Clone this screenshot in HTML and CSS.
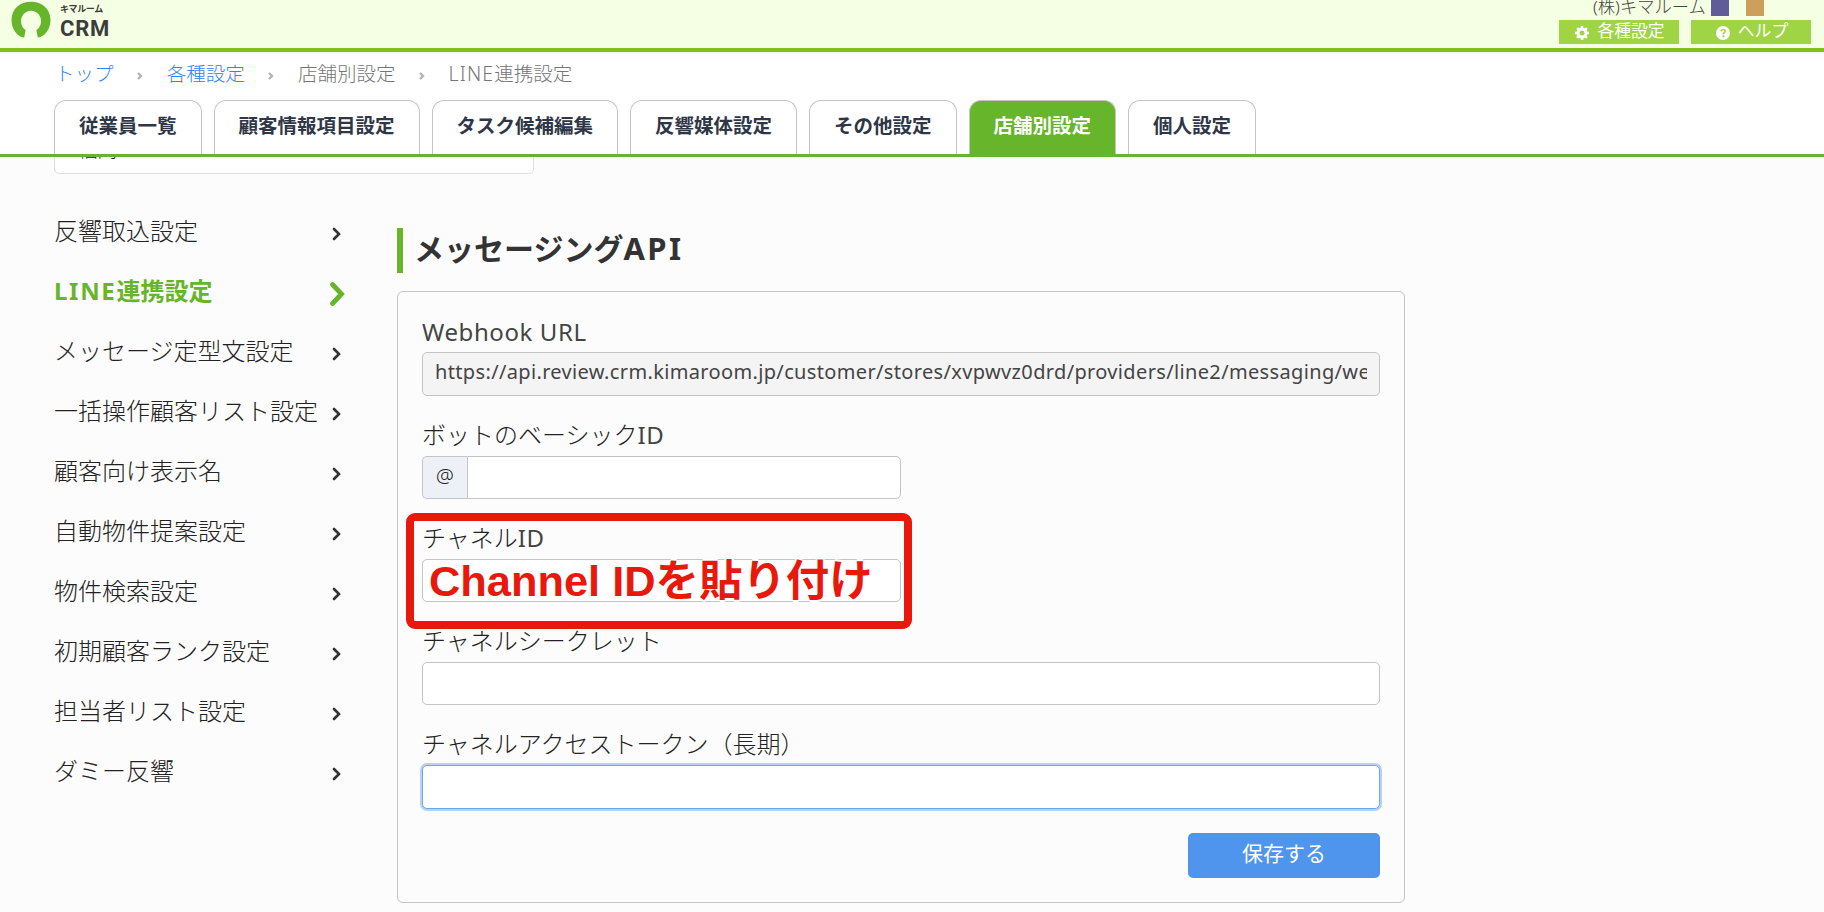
FILE: index.html
```
<!DOCTYPE html>
<html lang="ja">
<head>
<meta charset="UTF-8">
<meta name="viewport" content="width=device-width, initial-scale=1.0">
<title>LINE連携設定 | キマルームCRM</title>
<link rel="stylesheet" href="styles.css">
</head>
<body>
<header class="header">
    <a class="logo" href="#">
        <svg class="logo-mark" width="40" height="38" viewBox="0 0 40 38">
            <path d="M13.2 37.6 L14.6 30 A10 10.5 0 1 1 25.4 30 L26.8 37.6 C34 36.5 39.5 29 39.5 20 C39.5 9 31 1.8 20 1.8 C9 1.8 0.5 9 0.5 20 C0.5 29 6 36.5 13.2 37.6 Z" fill="#67b52a"/>
        </svg>
        <span class="logo-text">
            <span class="logo-kana">キマルーム</span>
            <span class="logo-crm">CRM</span>
        </span>
    </a>
    <div class="header-right">
        <div class="account">
            <span class="company">(株)キマルーム</span>
            <span class="mask mask-purple"></span>
            <span class="mask mask-brown"></span>
        </div>
        <div class="header-buttons">
            <a class="header-btn" href="#">
                <svg width="14" height="14" viewBox="0 0 14 14">
                    <circle cx="7" cy="7" r="4" fill="none" stroke="#fff" stroke-width="3"/>
                    <path d="M7 0v2.5M7 11.5V14M0 7h2.5M11.5 7H14M2.1 2.1l1.7 1.7M10.2 10.2l1.7 1.7M2.1 11.9l1.7-1.7M10.2 3.8l1.7-1.7" stroke="#fff" stroke-width="2.6"/>
                </svg>
                各種設定
            </a>
            <a class="header-btn" href="#">
                <svg width="14" height="14" viewBox="0 0 14 14">
                    <circle cx="7" cy="7" r="7" fill="#fff"/>
                    <path d="M4.9 5.4c.2-1.3 1-1.9 2.2-1.9 1.2 0 2.1.7 2.1 1.7 0 1.5-1.9 1.4-1.9 3" fill="none" stroke="#9fd544" stroke-width="1.6"/>
                    <rect x="6.4" y="9.3" width="1.9" height="1.9" fill="#9fd544"/>
                </svg>
                ヘルプ
            </a>
        </div>
    </div>
</header>

<nav class="breadcrumb">
    <a href="#">トップ</a>
    <svg class="sep" width="6" height="8" viewBox="0 0 6 8"><path d="M1 1l3 3-3 3"/></svg>
    <a href="#">各種設定</a>
    <svg class="sep" width="6" height="8" viewBox="0 0 6 8"><path d="M1 1l3 3-3 3"/></svg>
    <span>店舗別設定</span>
    <svg class="sep" width="6" height="8" viewBox="0 0 6 8"><path d="M1 1l3 3-3 3"/></svg>
    <span><span class="latin">LINE</span>連携設定</span>
</nav>

<ul class="tabs">
    <li class="tab">従業員一覧</li>
    <li class="tab">顧客情報項目設定</li>
    <li class="tab">タスク候補編集</li>
    <li class="tab">反響媒体設定</li>
    <li class="tab">その他設定</li>
    <li class="tab active">店舗別設定</li>
    <li class="tab">個人設定</li>
</ul>

<div class="store-clip">
    <div class="store-select">福岡</div>
</div>

<main class="content">
    <ul class="side-menu">
        <li><span>反響取込設定</span><svg class="chevron" width="10" height="14" viewBox="0 0 10 14"><path d="M2 2l5 5-5 5"/></svg></li>
        <li class="active"><span><span class="latin">LINE</span>連携設定</span><svg class="chevron" width="16" height="26" viewBox="0 0 16 26"><path d="M3.5 3.5l9 9.5-9 9.5"/></svg></li>
        <li><span>メッセージ定型文設定</span><svg class="chevron" width="10" height="14" viewBox="0 0 10 14"><path d="M2 2l5 5-5 5"/></svg></li>
        <li><span>一括操作顧客リスト設定</span><svg class="chevron" width="10" height="14" viewBox="0 0 10 14"><path d="M2 2l5 5-5 5"/></svg></li>
        <li><span>顧客向け表示名</span><svg class="chevron" width="10" height="14" viewBox="0 0 10 14"><path d="M2 2l5 5-5 5"/></svg></li>
        <li><span>自動物件提案設定</span><svg class="chevron" width="10" height="14" viewBox="0 0 10 14"><path d="M2 2l5 5-5 5"/></svg></li>
        <li><span>物件検索設定</span><svg class="chevron" width="10" height="14" viewBox="0 0 10 14"><path d="M2 2l5 5-5 5"/></svg></li>
        <li><span>初期顧客ランク設定</span><svg class="chevron" width="10" height="14" viewBox="0 0 10 14"><path d="M2 2l5 5-5 5"/></svg></li>
        <li><span>担当者リスト設定</span><svg class="chevron" width="10" height="14" viewBox="0 0 10 14"><path d="M2 2l5 5-5 5"/></svg></li>
        <li><span>ダミー反響</span><svg class="chevron" width="10" height="14" viewBox="0 0 10 14"><path d="M2 2l5 5-5 5"/></svg></li>
    </ul>

    <section class="panel">
        <h2 class="panel-title">メッセージング<span class="latin">API</span></h2>
        <form class="card">
            <div class="field webhook">
                <label><span class="latin">Webhook URL</span></label>
                <div class="input readonly"><span class="url">https://api.review.crm.kimaroom.jp/customer/stores/xvpwvz0drd/providers/line2/messaging/we</span></div>
            </div>
            <div class="field half">
                <label>ボットのベーシック<span class="latin">ID</span></label>
                <div class="input-group">
                    <span class="addon">@</span>
                    <div class="input"></div>
                </div>
            </div>
            <div class="field half">
                <label>チャネル<span class="latin">ID</span></label>
                <div class="input"></div>
                <div class="callout"><span class="callout-text">Channel IDを貼り付け</span></div>
            </div>
            <div class="field">
                <label>チャネルシークレット</label>
                <div class="input"></div>
            </div>
            <div class="field">
                <label>チャネルアクセストークン（長期）</label>
                <div class="input focus"></div>
            </div>
            <button class="save" type="button">保存する</button>
        </form>
    </section>
</main>
</body>
</html>
```

FILE: styles.css
```
* {
    box-sizing: border-box;
}

body {
    margin: 0;
    height: 912px;
    overflow: hidden;
    background: #fcfcfc;
    color: #222;
    font-family: "Noto Sans", "Noto Sans CJK JP", sans-serif;
    font-weight: 300;
}

ul {
    margin: 0;
    padding: 0;
    list-style: none;
}

a {
    color: #3583ea;
    text-decoration: none;
}

/* header */
.header {
    display: flex;
    justify-content: space-between;
    height: 52px;
    padding: 0 13px 0 11px;
    background: #f5ffe3;
    border-bottom: 4px solid #83bf17;
}

.logo {
    display: flex;
    gap: 9px;
    color: #3c3c3c;
}

.logo-text {
    display: flex;
    flex-direction: column;
    padding-top: 3px;
}

.logo-kana {
    font-size: 9px;
    line-height: 11px;
    font-weight: 700;
    letter-spacing: -0.4px;
}

.logo-crm {
    font-family: "Roboto", sans-serif;
    font-size: 22px;
    line-height: 29px;
    font-weight: 700;
    letter-spacing: 0.8px;
}

.account {
    display: flex;
    height: 20px;
    padding-left: 34px;
}

.company {
    width: 118px;
    color: #444;
    font-size: 17.3px;
    line-height: 14px;
    white-space: nowrap;
}

.mask {
    width: 18px;
    height: 16px;
    margin-right: 17px;
}

.mask-purple {
    background: #605c99;
}

.mask-brown {
    background: #cca05c;
}

.header-buttons {
    display: flex;
    gap: 12px;
}

.header-btn {
    display: flex;
    align-items: center;
    justify-content: center;
    gap: 8px;
    width: 120px;
    height: 24px;
    padding: 0 0 2px 2px;
    background: #9fd544;
    color: #fff;
    font-size: 16.8px;
    font-weight: 400;
    line-height: 20px;
}

.header-btn svg {
    margin-top: 3px;
}

/* breadcrumb */
.breadcrumb {
    display: flex;
    align-items: center;
    gap: 23.6px;
    height: 48px;
    padding: 0 55px 7px;
    background: #fff;
    color: #757575;
    font-size: 19.5px;
}

.sep {
    margin-top: 7px;
}

.sep path {
    fill: none;
    stroke: #b4b4b4;
    stroke-width: 2.4;
}

.breadcrumb .latin {
    letter-spacing: 1.1px;
}

/* tabs */
.tabs {
    display: flex;
    gap: 12px;
    height: 57px;
    padding-left: 54px;
    background: #fff;
    border-bottom: 3px solid #67b52a;
}

.tab {
    padding: 0 24px;
    border: 1px solid #c4c4c4;
    border-bottom: 0;
    border-radius: 12px 12px 0 0;
    color: #2f3747;
    font-size: 19.5px;
    font-weight: 700;
    line-height: 49px;
}

.tab.active {
    background: #67b52a;
    color: #fff;
}

/* store select */
.store-clip {
    display: flex;
    align-items: flex-end;
    height: 17px;
    padding-left: 54px;
    overflow: hidden;
}

.store-select {
    width: 480px;
    height: 44px;
    padding-left: 23px;
    background: #fff;
    border: 1px solid #dcdfe6;
    border-radius: 5px;
    font-size: 19.5px;
    line-height: 37px;
}

/* content */
.content {
    display: flex;
    padding: 28px 0 0 54px;
}

.side-menu {
    width: 343px;
}

.side-menu li {
    display: flex;
    align-items: center;
    justify-content: space-between;
    height: 60px;
    padding: 0 55px 6px 0;
    font-size: 24px;
    white-space: nowrap;
}

.side-menu .active {
    padding-right: 52px;
    color: #67b52a;
    font-weight: 700;
}

.side-menu .latin {
    letter-spacing: 1.7px;
}

.chevron {
    flex-shrink: 0;
    margin-top: 10px;
}

.chevron path {
    fill: none;
    stroke: #333;
    stroke-width: 2.6;
    stroke-linecap: round;
}

.active .chevron path {
    stroke: #67b52a;
    stroke-width: 4.8;
}

.panel {
    width: 1008px;
    padding-top: 26px;
}

.panel-title {
    height: 45px;
    margin: 0 0 18px;
    padding-left: 11px;
    border-left: 6px solid #67b52a;
    color: #333;
    font-size: 30px;
    line-height: 40px;
}

.panel-title .latin {
    font-size: 31px;
    letter-spacing: 2.4px;
}

.card {
    display: flex;
    flex-direction: column;
    height: 612px;
    padding: 24px 24px 0;
    border: 1px solid #c4c4c4;
    border-radius: 6px;
}

.field {
    position: relative;
    height: 103px;
}

.field.half {
    width: 479px;
}

.field label {
    display: block;
    height: 37px;
    font-size: 24px;
    line-height: 32px;
}

.field label .latin {
    color: #444;
    font-weight: 400;
    letter-spacing: 0.6px;
}

.field.webhook label {
    height: 36px;
}

.input {
    width: 100%;
    height: 43px;
    padding: 0 12px;
    background: #fff;
    border: 1px solid #c4c4c4;
    border-radius: 5px;
    font-size: 20px;
    line-height: 38px;
}

.input.readonly {
    height: 44px;
    background: #f4f4f4;
}

.url {
    display: block;
    overflow: hidden;
    color: #444;
    font-weight: 400;
    letter-spacing: 0.35px;
    white-space: nowrap;
}

.input.focus {
    height: 44px;
    border-color: #6ba8ea;
    box-shadow: 0 0 0 2px #b4d3f5;
}

.input-group {
    display: flex;
}

.addon {
    width: 45px;
    height: 43px;
    border: 1px solid #c4c4c4;
    border-right: 0;
    border-radius: 5px 0 0 5px;
    background: #edf1f7;
    font-size: 20px;
    line-height: 38px;
    text-align: center;
}

.input-group .input {
    flex: 1;
    border-radius: 0 5px 5px 0;
}

/* red annotation drawn over the channel id field */
.callout {
    position: absolute;
    top: -9px;
    left: -16px;
    width: 506px;
    height: 116px;
    padding: 38px 0 0 15px;
    border: 8px solid #e8190c;
    border-radius: 9px;
}

.callout-text {
    display: block;
    color: #e8190c;
    font-family: "Liberation Sans", "Noto Sans CJK JP", sans-serif;
    font-size: 43.4px;
    font-weight: 700;
    line-height: 44px;
    white-space: nowrap;
    text-shadow: 2px 0 #fff, -2px 0 #fff, 0 2px #fff, 0 -2px #fff;
}

.save {
    align-self: flex-end;
    width: 192px;
    height: 45px;
    margin-top: 2px;
    padding-bottom: 8px;
    background: #5095ed;
    border: 0;
    border-radius: 5px;
    color: #fff;
    font-family: inherit;
    font-size: 21px;
}
```
